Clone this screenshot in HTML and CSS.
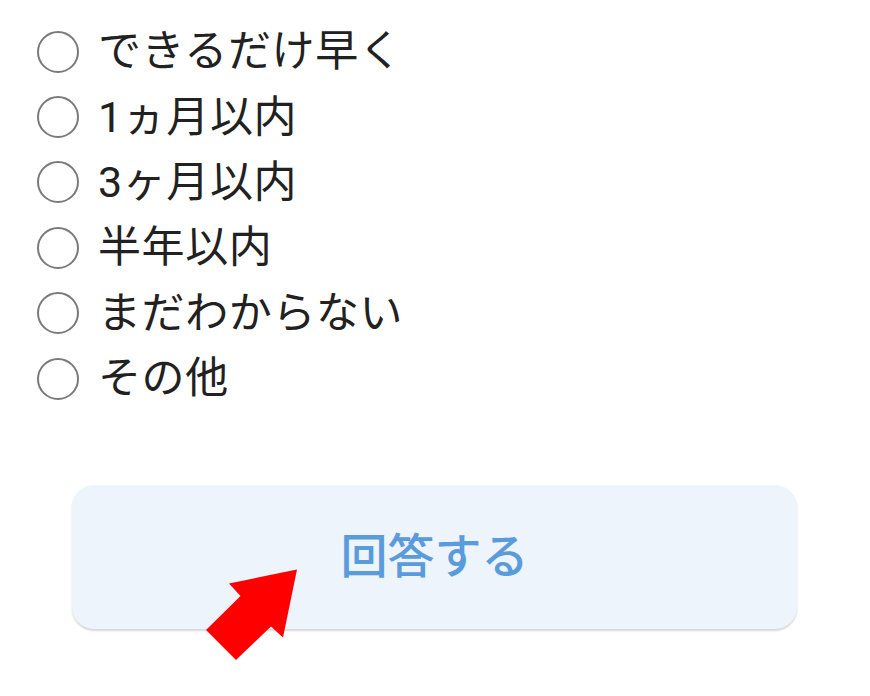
FILE: index.html
```html
<!DOCTYPE html>
<html lang="ja">
  <head>
    <meta charset="UTF-8" />
    <meta name="viewport" content="width=device-width, initial-scale=1.0" />
    <title>回答</title>
    <link rel="stylesheet" href="styles.css">
  </head>
  <body>
    <div class="container">
      <ul class="options">
        <li class="option"><span class="radio"></span><span class="label">できるだけ早く</span></li>
        <li class="option"><span class="radio"></span><span class="label">1ヵ月以内</span></li>
        <li class="option"><span class="radio"></span><span class="label">3ヶ月以内</span></li>
        <li class="option"><span class="radio"></span><span class="label">半年以内</span></li>
        <li class="option"><span class="radio"></span><span class="label">まだわからない</span></li>
        <li class="option"><span class="radio"></span><span class="label">その他</span></li>
      </ul>

      <div class="submit-area">
        <button class="submit">回答する</button>
        <!-- 矢印 -->
        <svg class="arrow" width="100" height="100" viewBox="200 565 100 100">
          <polygon points="297,570.5 229,584.5 240.5,597 206,631 236,661 271,627.5 283,638.5" fill="#ff0000" />
        </svg>
      </div>
    </div>
  </body>
</html>
```

FILE: styles.css
```css
* {
  margin: 0;
  padding: 0;
  box-sizing: border-box;
}

body {
  background: #ffffff;
  font-family: "Roboto", "Noto Sans CJK JP", sans-serif;
  color: #212121;
  overflow: hidden;
}

.container {
  width: 870px;
  height: 696px;
}

/* 選択肢 */
.options {
  list-style: none;
  padding: 19px 0 0 37px;
}

.option {
  display: flex;
  align-items: center;
  height: 65.4px;
}

.radio {
  width: 42px;
  height: 42px;
  border: 2px solid #7a7a7a;
  border-radius: 50%;
  flex-shrink: 0;
}

.label {
  margin-left: 19px;
  font-size: 43px;
  line-height: 1;
  letter-spacing: 0.6px;
}

/* ボタン */
.submit-area {
  position: relative;
  margin: 74px 0 0 72px;
  width: 725px;
}

.submit {
  display: flex;
  justify-content: center;
  align-items: center;
  width: 100%;
  height: 144px;
  padding-bottom: 10px;
  border: none;
  border-radius: 22px;
  background: #edf4fc;
  color: #5a9bdc;
  font-family: "Roboto", "Noto Sans CJK JP", sans-serif;
  font-size: 47px;
  font-weight: 500;
  box-shadow: 0 2px 2px rgba(0, 0, 0, 0.16);
}

.arrow {
  position: absolute;
  left: 128px;
  top: 79px;
}
```
